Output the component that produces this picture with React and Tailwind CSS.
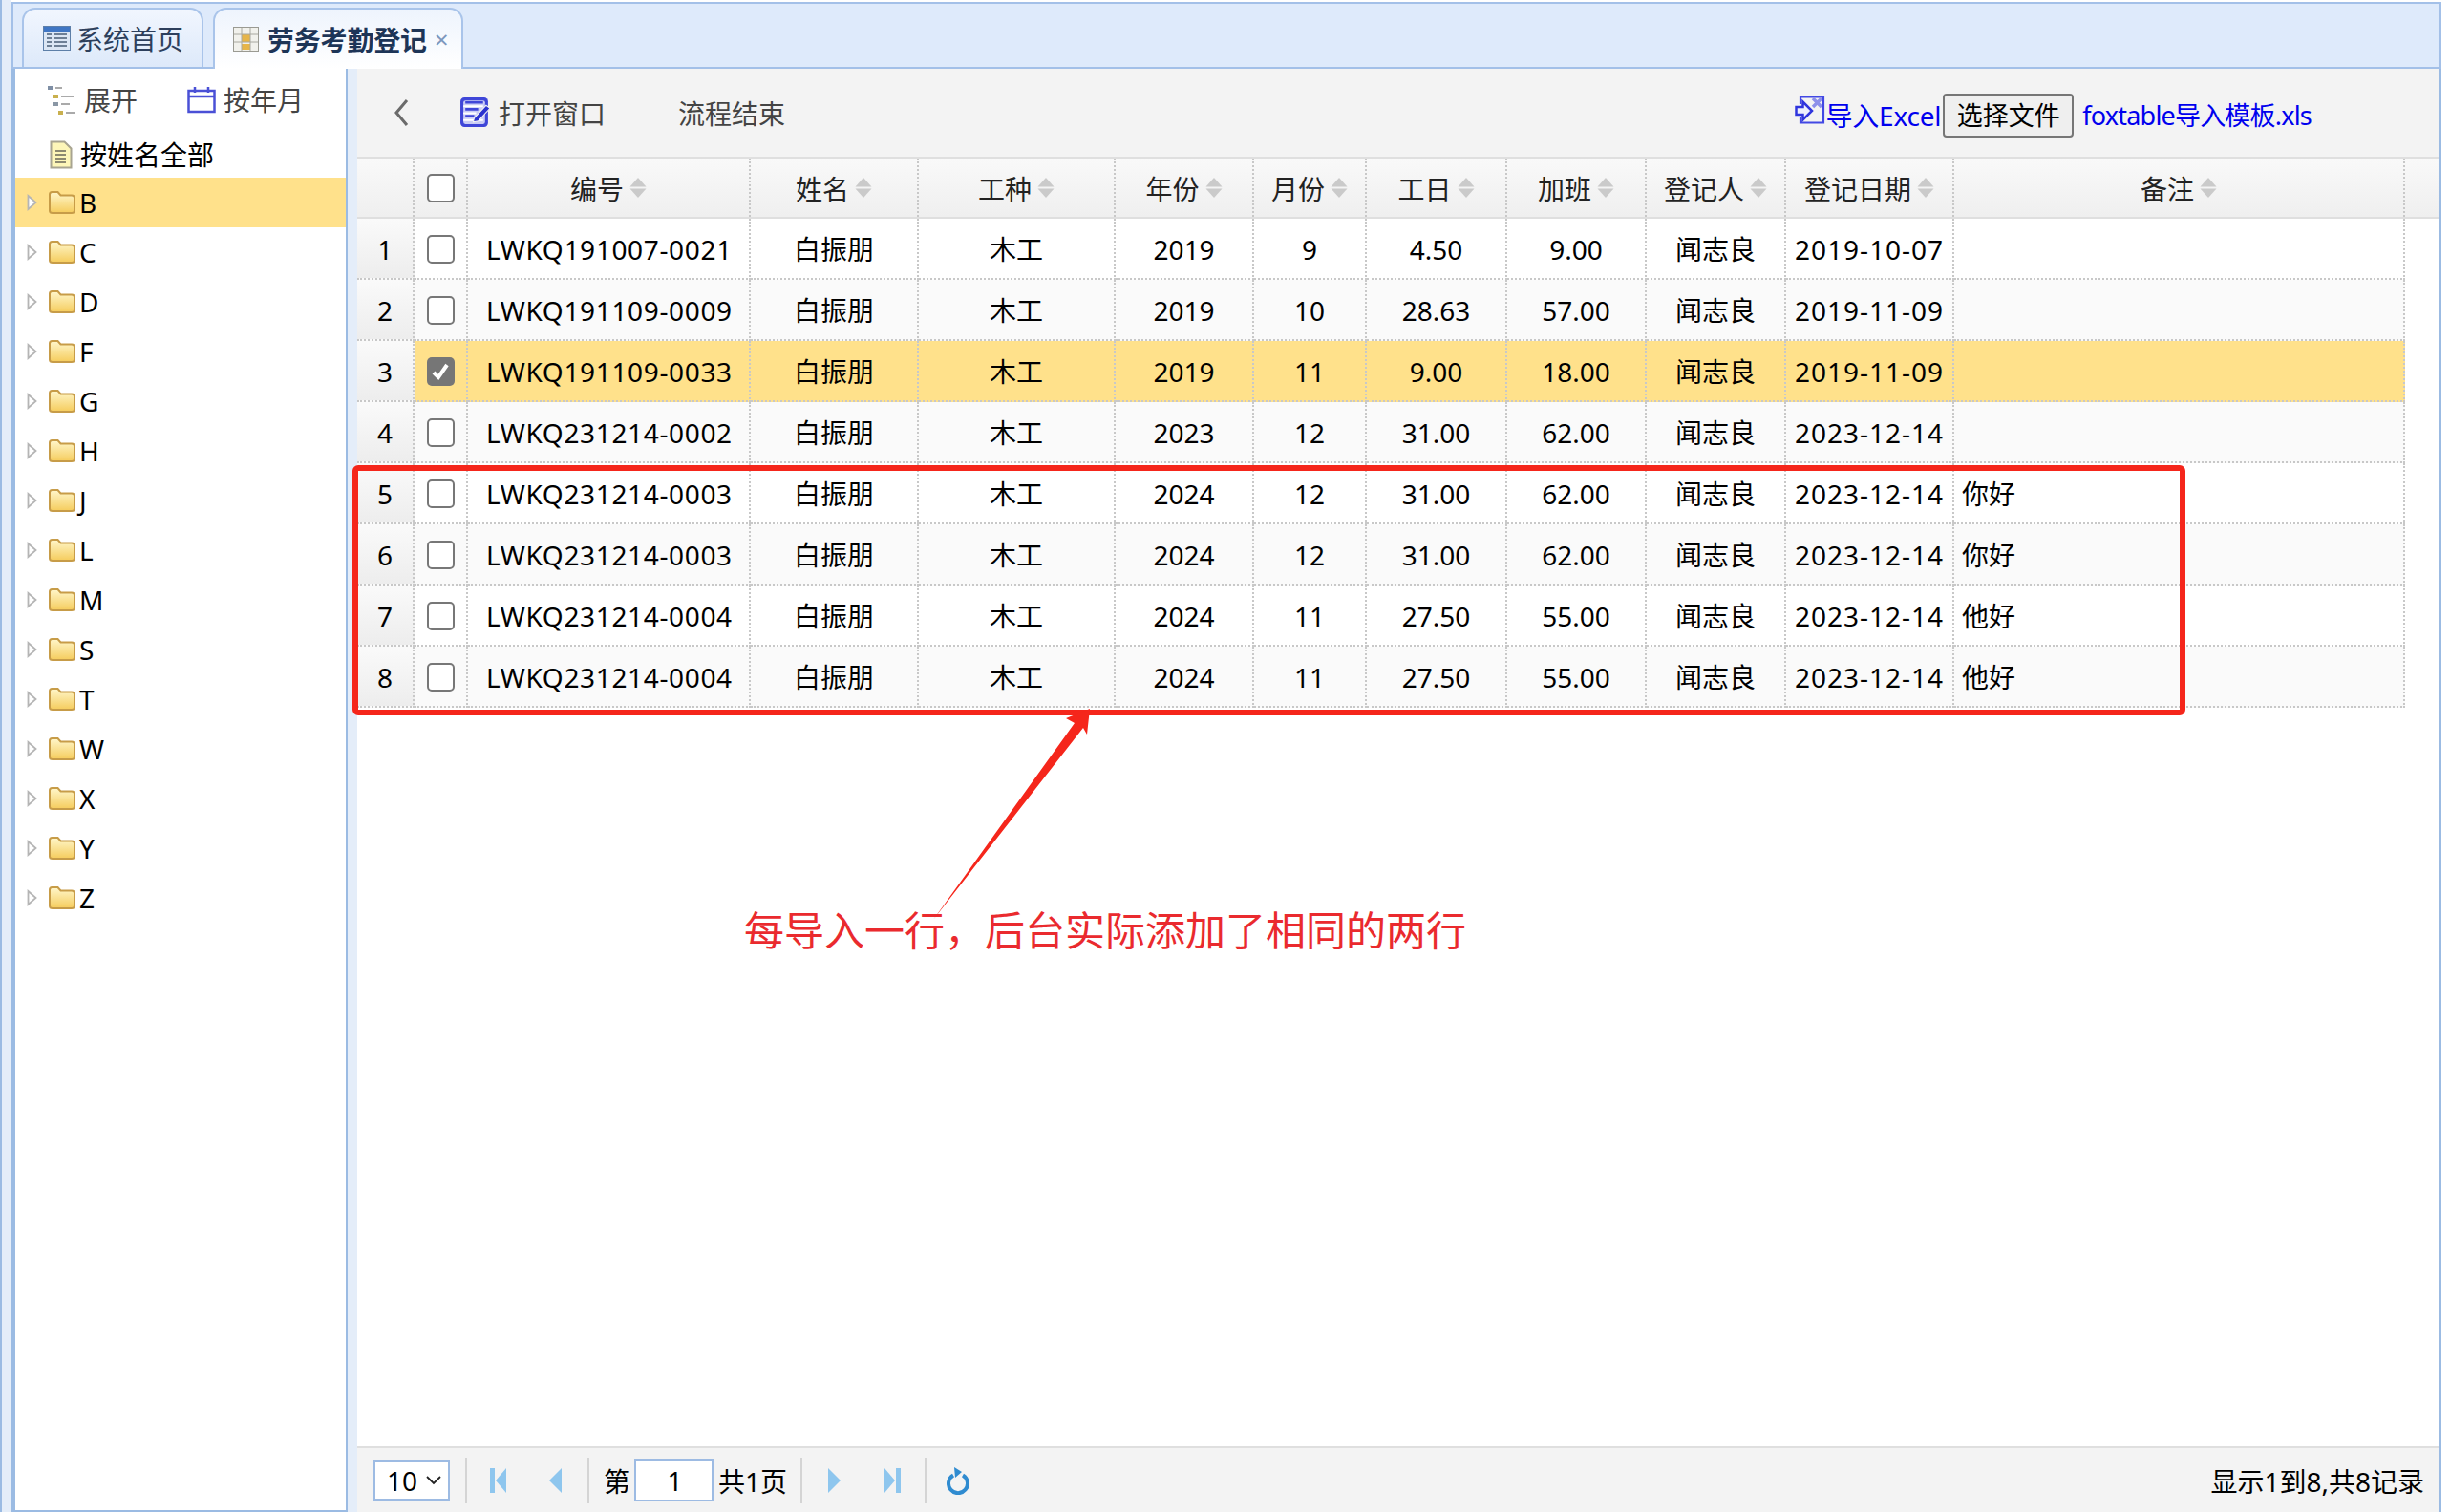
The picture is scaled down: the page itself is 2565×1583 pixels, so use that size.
import React from "react";

const cols = [
  { w: "w-[60px]", cls: "justify-center" },
  { w: "w-[56px]", cls: "justify-center" },
  { w: "w-[296px]", cls: "justify-start pl-[19px] tracking-[0.65px]" },
  { w: "w-[176px]", cls: "justify-center" },
  { w: "w-[206px]", cls: "justify-center" },
  { w: "w-[145px]", cls: "justify-center" },
  { w: "w-[118px]", cls: "justify-center" },
  { w: "w-[147px]", cls: "justify-center" },
  { w: "w-[146px]", cls: "justify-center" },
  { w: "w-[146px]", cls: "justify-center" },
  { w: "w-[176px]", cls: "justify-center tracking-[1px]" },
  { w: "w-[472px]", cls: "justify-start pl-[8px]" },
];

const headers = ["", "", "编号", "姓名", "工种", "年份", "月份", "工日", "加班", "登记人", "登记日期", "备注"];

const rows = [
  ["LWKQ191007-0021", "2019", "9", "4.50", "9.00", "2019-10-07", ""],
  ["LWKQ191109-0009", "2019", "10", "28.63", "57.00", "2019-11-09", ""],
  ["LWKQ191109-0033", "2019", "11", "9.00", "18.00", "2019-11-09", ""],
  ["LWKQ231214-0002", "2023", "12", "31.00", "62.00", "2023-12-14", ""],
  ["LWKQ231214-0003", "2024", "12", "31.00", "62.00", "2023-12-14", "你好"],
  ["LWKQ231214-0003", "2024", "12", "31.00", "62.00", "2023-12-14", "你好"],
  ["LWKQ231214-0004", "2024", "11", "27.50", "55.00", "2023-12-14", "他好"],
  ["LWKQ231214-0004", "2024", "11", "27.50", "55.00", "2023-12-14", "他好"],
];

const letters = ["B", "C", "D", "F", "G", "H", "J", "L", "M", "S", "T", "W", "X", "Y", "Z"];

function Checkbox({ checked }) {
  if (checked) {
    return (
      <span className="flex w-[29px] h-[30px] items-center justify-center rounded-[5px] bg-[#767676]">
        <svg width="22" height="22" viewBox="0 0 22 22">
          <path d="M4 12l5 5 9-13" fill="none" stroke="#fff" strokeWidth="4" />
        </svg>
      </span>
    );
  }
  return <span className="block w-[29px] h-[30px] rounded-[5px] border-[2.5px] border-[#777] bg-white" />;
}

function SortIcon() {
  return (
    <svg className="ml-[6px]" width="18" height="21" viewBox="0 0 18 21">
      <path d="M9 0L17.500 9.500H0.500z" fill="#cacaca" />
      <path d="M0.500 11.500h17L9 21z" fill="#cacaca" />
    </svg>
  );
}

function FolderIcon() {
  return (
    <svg width="30" height="28" viewBox="0 0 30 28">
      <defs>
        <linearGradient id="fold" x1="0" y1="0" x2="0" y2="1">
          <stop offset="0" stopColor="#fff7cc" />
          <stop offset="1" stopColor="#f5cc5c" />
        </linearGradient>
      </defs>
      <path
        d="M2 5.500Q2 3 4.500 3h6l3 3.500h11.500Q28 6.500 28 9v13.500Q28 25 25 25H5q-3 0-3-2.500z"
        fill="url(#fold)"
        stroke="#c79c48"
        strokeWidth="2"
      />
    </svg>
  );
}

function TreeRow({ letter, active }) {
  return (
    <div className={`flex h-[52px] items-center pl-[12px] ${active ? "bg-[#ffe18b]" : ""}`}>
      <svg width="11" height="18" viewBox="0 0 11 18">
        <path d="M1.500 2l8 7-8 7z" fill="#fff" stroke="#b5b5b5" strokeWidth="1.800" />
      </svg>
      <span className="ml-[11px] flex">
        <FolderIcon />
      </span>
      <span className="ml-[3px] text-black">{letter}</span>
    </div>
  );
}

function PagerSep() {
  return <span className="block h-[48px] w-[2px] bg-[#d4d4d4]" />;
}

function Tabs() {
  return (
    <div className="flex h-[70px] shrink-0 items-end gap-[10px] border-2 border-[#a3c0e8] bg-[#deeafb] pl-[9px]">
      <div className="flex h-[62px] w-[190px] items-center rounded-t-[14px] border-2 border-b-0 border-[#a9c4ea] bg-gradient-to-b from-[#f1f6fe] to-[#dde9fa] pl-[20px] text-[#2d3f5c]">
        <svg width="29" height="26" viewBox="0 0 29 26">
          <rect x="0.500" y="0.500" width="28" height="25" fill="#dbe6f4" stroke="#5d7fa8" />
          <rect x="1" y="1" width="27" height="5" fill="#3f76c4" />
          <path d="M4 9h5M4 13h5M4 17h5M4 21h5" stroke="#6d7f95" strokeWidth="2" />
          <path d="M12 9h13M12 13h13M12 17h13M12 21h13" stroke="#6d7f95" strokeWidth="2" />
        </svg>
        <span className="ml-[6px] pt-[1px]">系统首页</span>
      </div>
      <div className="-mb-[2px] flex h-[64px] w-[262px] items-center rounded-t-[14px] border-2 border-b-0 border-[#a9c4ea] bg-gradient-to-b from-[#eef4fd] to-white pl-[19px] font-bold text-[#1d3557]">
        <svg width="27" height="26" viewBox="0 0 27 26">
          <rect x="0.500" y="0.500" width="26" height="25" fill="#f1f1ec" stroke="#9a9a92" />
          <rect x="9" y="8" width="9" height="8" fill="#e6b54a" />
          <rect x="9" y="18" width="9" height="6" fill="#e6b54a" />
          <path d="M9 1v24M18 1v24M1 8h25M1 16h25" stroke="#a8a8a0" strokeWidth="1" />
        </svg>
        <span className="ml-[9px] pt-[1px] tracking-[-0.2px]">劳务考勤登记</span>
        <span className="ml-[8px] text-[26px] font-normal text-[#7d97bd]">×</span>
      </div>
    </div>
  );
}

function Sidebar() {
  return (
    <div className="flex w-[352px] shrink-0 flex-col border-y-0 border-b-2 border-l-4 border-r-2 border-[#9bbbe3] bg-white">
      <div className="flex h-[66px] shrink-0 items-center pl-[33px] text-[#444]">
        <svg width="30" height="32" viewBox="0 0 30 32">
          <rect x="1" y="1" width="5" height="4" fill="#7f8fa5" />
          <path d="M9 3h7" stroke="#aaa" strokeWidth="2" />
          <rect x="7" y="10" width="5" height="4" fill="#c9b04e" />
          <path d="M15 12h13" stroke="#aaa" strokeWidth="2" />
          <rect x="7" y="18" width="5" height="4" fill="#8a97a5" />
          <path d="M15 20h9" stroke="#aaa" strokeWidth="2" />
          <rect x="12" y="27" width="5" height="4" fill="#c9b04e" />
          <path d="M20 29h9" stroke="#aaa" strokeWidth="2" />
        </svg>
        <span className="ml-[9px]">展开</span>
        <svg className="ml-[52px]" width="30" height="28" viewBox="0 0 30 28">
          <rect x="1.500" y="4" width="27" height="22" fill="#fff" stroke="#4a50d6" strokeWidth="2.500" />
          <path d="M1.500 10h27" stroke="#4a50d6" strokeWidth="2.500" />
          <path d="M8 0v6M22 0v6" stroke="#4a50d6" strokeWidth="2.500" />
        </svg>
        <span className="ml-[8px]">按年月</span>
      </div>
      <div className="flex h-[48px] shrink-0 items-center pl-[36px] text-black">
        <svg width="24" height="30" viewBox="0 0 24 30">
          <path d="M1.500 1.500h14l7 7v20h-21z" fill="#fdf6b8" stroke="#a8a490" strokeWidth="2" />
          <path d="M6 11h11M6 15h11M6 19h11M6 23h11" stroke="#8d8a70" strokeWidth="1.800" />
        </svg>
        <span className="ml-[8px]">按姓名全部</span>
      </div>
      {letters.map((l, i) => (
        <TreeRow key={l} letter={l} active={i === 0} />
      ))}
    </div>
  );
}

function Toolbar() {
  return (
    <div className="flex h-[92px] shrink-0 items-center bg-[#f3f3f3] text-[#444]">
      <svg className="ml-[38px]" width="17" height="30" viewBox="0 0 17 30">
        <path d="M14 2L3 15l11 13" fill="none" stroke="#6b6b6b" strokeWidth="3" />
      </svg>
      <svg className="ml-[52px] -mt-[1px]" width="33" height="33" viewBox="0 0 32 32">
        <rect x="1" y="1" width="28" height="30" rx="4" fill="#3f46d8" />
        <rect x="4" y="4" width="22" height="24" rx="2" fill="#c9ccf5" />
        <path d="M4 10h20M4 17h13M4 24h20" stroke="#fff" strokeWidth="2" />
        <path d="M6 6h18M6 13h13M6 20h9" stroke="#3f46d8" strokeWidth="2.500" />
        <path d="M15 22L27 9l4 3-12 13-5 1z" fill="#2b33cf" stroke="#f3f3f3" strokeWidth="1" />
      </svg>
      <span className="ml-[8px] pt-[2px]">打开窗口</span>
      <span className="ml-[76px] pt-[2px]">流程结束</span>
      <div className="ml-auto mr-[134px] mt-[6px] flex items-center">
        <svg className="-mt-[10px]" width="32" height="32" viewBox="0 0 32 32">
          <path d="M6 9V1.500h24v27H6V23" fill="none" stroke="#4248e4" strokeWidth="2.200" />
          <path d="M1.500 12h7V6.500L18 16l-9.500 9.500V20h-7z" fill="#eef0fe" stroke="#2f35dd" strokeWidth="2.500" />
          <path d="M19 3l9 9M28 3l-9 9" stroke="#8d90ea" strokeWidth="3.500" />
        </svg>
        <span className="text-[#0000ee] tracking-[-0.2px]">导入Excel</span>
        <button className="ml-[2px] flex h-[46px] w-[137px] items-center justify-center rounded-[4px] border-2 border-[#767676] bg-[#efefef] text-[27px] text-black">
          <span className="pt-[1px]">选择文件</span>
        </button>
        <span className="ml-[9px] text-[27px] text-[#0000ee] tracking-[-0.8px]">foxtable导入模板.xls</span>
      </div>
    </div>
  );
}

function GridHeader() {
  return (
    <div className="flex h-[65px] shrink-0 border-y-2 border-[#dfdfdf] bg-gradient-to-b from-[#f9f9f9] to-[#efefef] text-[#222]">
      {headers.map((h, i) => (
        <div
          key={i}
          className={`${cols[i].w} flex shrink-0 items-center justify-center border-r-2 border-dotted border-[#c8c8c8]`}
        >
          {i === 1 && <Checkbox />}
          {h && (
            <>
              <span className="pt-[3px]">{h}</span>
              <SortIcon />
            </>
          )}
        </div>
      ))}
    </div>
  );
}

function GridRow({ row, index }) {
  const selected = index === 2;
  const rowBg = selected ? "bg-[#ffe18b]" : index % 2 === 0 ? "bg-white" : "bg-[#fafafa]";
  const values = [String(index + 1), null, row[0], "白振朋", "木工", row[1], row[2], row[3], row[4], "闻志良", row[5], row[6]];
  return (
    <div className="flex h-[64px] text-black">
      {values.map((v, i) => (
        <div
          key={i}
          className={`${cols[i].w} ${cols[i].cls} ${
            i === 0 ? "bg-gradient-to-b from-[#fafafa] to-[#ededed]" : rowBg
          } flex shrink-0 items-center border-b-2 border-r-2 border-dotted border-[#c8c8c8]`}
        >
          {i === 1 ? (
            <span className="pt-[2px]">
              <Checkbox checked={selected} />
            </span>
          ) : (
            <span className="pt-[2px]">{v}</span>
          )}
        </div>
      ))}
    </div>
  );
}

function Pager() {
  return (
    <div className="flex h-[69px] shrink-0 items-center border-t-2 border-[#dfdfdf] bg-[#f3f3f3] text-black">
      <div className="ml-[17px] flex h-[42px] w-[80px] items-center justify-between border-2 border-[#9dbbe3] bg-white pl-[12px] pr-[7px]">
        <span className="pt-[1px]">10</span>
        <svg width="16" height="10" viewBox="0 0 16 10">
          <path d="M1 1l7 7 7-7" fill="none" stroke="#222" strokeWidth="1.800" />
        </svg>
      </div>
      <span className="ml-[16px]"><PagerSep /></span>
      <svg className="ml-[24px]" width="18" height="30" viewBox="0 0 18 30">
        <rect x="0" y="2" width="5" height="26" fill="#8ec6ee" />
        <path d="M17 2v26L6 15z" fill="#8ec6ee" />
      </svg>
      <svg className="ml-[43px]" width="14" height="30" viewBox="0 0 14 30">
        <path d="M14 2v26L1 15z" fill="#8ec6ee" />
      </svg>
      <span className="ml-[27px]"><PagerSep /></span>
      <span className="ml-[15px] pt-[2px]">第</span>
      <div className="ml-[4px] flex h-[44px] w-[83px] items-center justify-center border-2 border-[#9dbbe3] bg-white pl-[2px]">1</div>
      <span className="ml-[5px] pt-[2px]">共1页</span>
      <span className="ml-[14px]"><PagerSep /></span>
      <svg className="ml-[27px]" width="14" height="30" viewBox="0 0 14 30">
        <path d="M0 2v26l13-13z" fill="#8ec6ee" />
      </svg>
      <svg className="ml-[44px]" width="18" height="30" viewBox="0 0 18 30">
        <path d="M1 2v26l11-13z" fill="#8ec6ee" />
        <rect x="13" y="2" width="5" height="26" fill="#8ec6ee" />
      </svg>
      <span className="ml-[25px]"><PagerSep /></span>
      <svg className="ml-[21px]" width="24" height="30" viewBox="0 0 24 30">
        <path d="M7 9.500a10 10 0 1 0 10 0" fill="none" stroke="#2f8bd0" strokeWidth="4" />
        <path d="M8 1l8 5-7 6z" fill="#2f8bd0" />
      </svg>
      <span className="ml-auto mr-[16px] pt-[2px]">显示1到8,共8记录</span>
    </div>
  );
}

export default function App() {
  return (
    <div className="relative flex h-[1583px] w-[2565px] overflow-hidden bg-white font-['Noto_Sans','Noto_Sans_CJK_SC',sans-serif] text-[28px]">
      <div className="w-[12px] shrink-0 border-l-2 border-[#9bbbe3] bg-[#e4edf9]" />
      <div className="flex w-[2544px] shrink-0 flex-col pt-[2px]">
        <Tabs />
        <div className="flex min-h-0 flex-1 border-r-2 border-[#9bbbe3] bg-[#e4edf9]">
          <Sidebar />
          <div className="w-[10px] shrink-0" />
          <div className="flex min-w-0 flex-1 flex-col bg-white">
            <Toolbar />
            <GridHeader />
            <div className="flex-1">
              {rows.map((r, i) => (
                <GridRow key={i} row={r} index={i} />
              ))}
            </div>
            <Pager />
          </div>
        </div>
      </div>

      {/* red annotation on top of the screenshot */}
      <div className="absolute left-[369px] top-[487px] h-[262px] w-[1919px] rounded-[6px] border-[6px] border-[#f5261b]" />
      <svg className="absolute left-[970px] top-[735px]" width="180" height="235" viewBox="0 0 180 235">
        <path d="M171 7L168 34 164 27 7 228 155 22 146 17z" fill="#f5261b" />
      </svg>
      <div className="absolute left-[779px] top-[946px] whitespace-nowrap text-[42px] leading-[56px] text-[#ea2a2e]">
        每导入一行，后台实际添加了相同的两行
      </div>
    </div>
  );
}
